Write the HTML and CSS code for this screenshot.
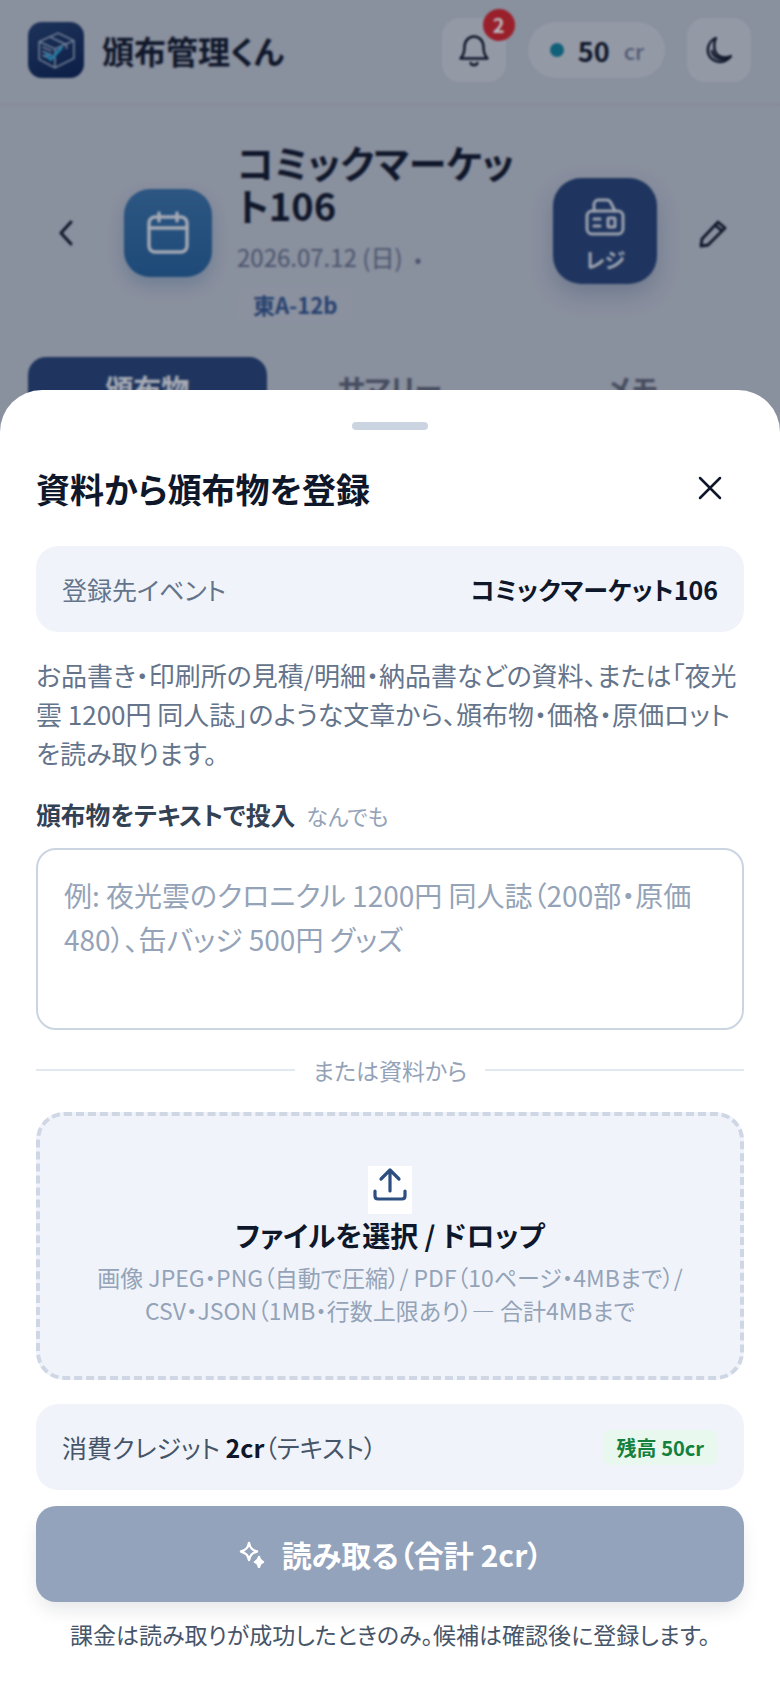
FILE: index.html
```html
<!DOCTYPE html>
<html lang="ja">
	<head>
		<meta charset="utf-8">
		<title>頒布管理くん</title>
		<link rel="stylesheet" href="styles.css">
	</head>
	<body>
		<header class="topbar">
			<div class="brand">
				<div class="brand-logo">
					<svg viewBox="0 0 40 40" width="42" height="42" fill="none" stroke="#a9bad0" stroke-width="1.4" stroke-linejoin="round">
						<path d="M4 12 L22 4 L37 11 L37 28 L19 37 L4 29 Z"/>
						<path d="M4 12 L19 19 L37 11 M19 19 L19 37"/>
						<path d="M15 8 L30 15 L30 19"/>
						<path d="M7 17 L16 21 M7 21 L16 25 M7 25 L16 29"/>
						<path d="M11 24 L15 29 L25 18" stroke="#2ea4d6" stroke-width="3" stroke-linecap="round"/>
					</svg>
				</div>
				<span class="brand-name">頒布管理くん</span>
			</div>
			<div class="top-actions">
				<button class="icon-btn">
					<svg viewBox="0 0 32 32" width="36" height="36" fill="none" stroke="#0f172a" stroke-width="2.2" stroke-linecap="round" stroke-linejoin="round">
						<path d="M4 23.5 C6.5 21 7.5 19 7.5 14 C7.5 8 11 4 16 4 C21 4 24.5 8 24.5 14 C24.5 19 25.5 21 28 23.5 Z"/>
						<path d="M13 27.5 C13.5 30 18.5 30 19 27.5"/>
					</svg>
					<span class="badge">2</span>
				</button>
				<div class="credit-pill">
					<span class="credit-dot"></span>
					<span class="credit-num">50</span>
					<span class="credit-unit">cr</span>
				</div>
				<button class="icon-btn">
					<svg viewBox="0 0 32 32" width="32" height="32" fill="none" stroke="#0f172a" stroke-width="2.4" stroke-linecap="round" stroke-linejoin="round">
						<path d="M13 4 C6 7 3.5 14 5.5 20 C8 27 17 30 23 26.5 C25 25.5 27 24 28 22 C21 25 14 23 12 17 C10.5 12 11 8 13 4 Z"/>
						<path d="M9 17 C10 23 17 27 24 25"/>
					</svg>
				</button>
			</div>
		</header>

		<section class="event-head">
			<button class="plain-btn back-btn">
				<svg viewBox="0 0 24 32" width="24" height="32" fill="none" stroke="#0f172a" stroke-width="3" stroke-linecap="round" stroke-linejoin="round"><path d="M17 5 L7 16 L17 27"/></svg>
			</button>
			<div class="event-icon">
				<svg viewBox="0 0 44 44" width="44" height="44" fill="none" stroke="#e4e8ef" stroke-width="3.4" stroke-linecap="round" stroke-linejoin="round">
					<rect x="3" y="6" width="38" height="35" rx="6"/>
					<path d="M3 17 H41 M13 2 V10 M31 2 V10"/>
				</svg>
			</div>
			<div class="event-info">
				<h1 class="event-title">コミックマーケット106</h1>
				<div class="event-date">2026.07.12 (日)<span class="event-sep">•</span></div>
				<span class="event-space">東A-12b</span>
			</div>
			<button class="register-btn">
				<svg viewBox="0 0 40 40" width="40" height="40" fill="none" stroke="#d8dee8" stroke-width="3" stroke-linecap="round" stroke-linejoin="round">
					<path d="M9 14 V8 C9 5 11 3 13 3 H22 C24 3 25 4 26 6 L30 14"/>
					<rect x="2" y="14" width="36" height="23" rx="5"/>
					<path d="M9 22 H15 M9 29 H15"/>
					<rect x="23" y="21" width="7" height="9" rx="1"/>
				</svg>
				<span>レジ</span>
			</button>
			<button class="plain-btn edit-btn">
				<svg viewBox="0 0 32 32" width="32" height="32" fill="none" stroke="#0f172a" stroke-width="2.8" stroke-linejoin="round"><path d="M5 22 L21 5 L28 11 L11 28 L4 29 Z M18 8 L25 14"/></svg>
			</button>
		</section>

		<nav class="tabs">
			<div class="tab active">頒布物</div>
			<div class="tab">サマリー</div>
			<div class="tab">メモ</div>
		</nav>

		<div class="overlay"></div>

		<div class="sheet">
			<div class="handle"></div>
			<div class="sheet-head">
				<h2>資料から頒布物を登録</h2>
				<svg viewBox="0 0 28 28" width="28" height="28" fill="none" stroke="#0f172a" stroke-width="2.5" stroke-linecap="round"><path d="M4 4 L24 24 M24 4 L4 24"/></svg>
			</div>
			<div class="info-row">
				<span class="info-label">登録先イベント</span>
				<strong>コミックマーケット106</strong>
			</div>
			<p class="lead">お品書き・印刷所の見積/明細・納品書などの資料、または「夜光雲 1200円 同人誌」のような文章から、頒布物・価格・原価ロットを読み取ります。</p>
			<div class="field-label">頒布物をテキストで投入<span>なんでも</span></div>
			<div class="textarea">例: 夜光雲のクロニクル 1200円 同人誌（200部・原価480）、缶バッジ 500円 グッズ</div>
			<div class="divider">または資料から</div>
			<div class="dropzone">
				<div class="upload-icon">
					<svg viewBox="0 0 36 36" width="36" height="36" fill="none" stroke="#2c4f80" stroke-width="3.2" stroke-linecap="round" stroke-linejoin="round"><path d="M18 24 V4 M9 12 L18 3 L27 12 M3 24 V29 C3 31 4 32 6 32 H30 C32 32 33 31 33 29 V24"/></svg>
				</div>
				<div class="drop-title">ファイルを選択 / ドロップ</div>
				<div class="drop-sub">画像 JPEG・PNG（自動で圧縮）/ PDF（10ページ・4MBまで）/<br>CSV・JSON（1MB・行数上限あり）— 合計4MBまで</div>
			</div>
			<div class="info-row credit-row">
				<span class="credit-text">消費クレジット <b>2cr</b>（テキスト）</span>
				<span class="balance">残高 50cr</span>
			</div>
			<button class="submit">
				<svg viewBox="0 0 28 28" width="28" height="28" fill="none" stroke="#fff" stroke-width="2.4" stroke-linejoin="round">
					<path d="M11 3 C12 8 14 10 19 11.5 C14 13 12 15 11 20 C10 15 8 13 3 11.5 C8 10 10 8 11 3 Z"/>
					<path d="M21 17 C21.5 20 22.5 21 25 22 C22.5 23 21.5 24 21 27 C20.5 24 19.5 23 17 22 C19.5 21 20.5 20 21 17 Z" fill="#fff"/>
				</svg>
				<span>読み取る（合計 2cr）</span>
			</button>
			<p class="note">課金は読み取りが成功したときのみ。候補は確認後に登録します。</p>
		</div>
	</body>
</html>
```

FILE: styles.css
```css
* {
	box-sizing: border-box;
}
html, body {
	height: 1688px;
}
body {
	margin: 0;
	overflow: hidden;
	position: relative;
	background: #bec4d0;
	color: #0f172a;
	font-family: "Noto Sans CJK JP", "Noto Sans", sans-serif;
	font-feature-settings: "palt";
}
button {
	font: inherit;
	border: none;
	background: none;
	padding: 0;
}

.topbar {
	display: flex;
	align-items: center;
	justify-content: space-between;
	height: 105px;
	padding: 0 29px 4px 28px;
	border-bottom: 1px solid #b3b8c4;
}
.brand {
	display: flex;
	align-items: center;
	gap: 18px;
}
.brand-logo {
	width: 56px;
	height: 56px;
	display: flex;
	align-items: center;
	justify-content: center;
	border-radius: 14px;
	background: linear-gradient(160deg, #243f6e, #0a2252);
}
.brand-name {
	font-size: 32px;
	font-weight: 700;
}
.top-actions {
	display: flex;
	align-items: center;
	gap: 22px;
}
.icon-btn {
	position: relative;
	width: 64px;
	height: 64px;
	display: flex;
	align-items: center;
	justify-content: center;
	border-radius: 18px;
	background: #cdd2db;
}
.badge {
	position: absolute;
	top: -9px;
	right: -9px;
	width: 32px;
	height: 32px;
	border-radius: 50%;
	background: #d5242c;
	color: #fff;
	font-size: 20px;
	font-weight: 700;
	line-height: 32px;
	text-align: center;
}
.credit-pill {
	display: flex;
	align-items: center;
	height: 56px;
	padding: 0 21px 0 22px;
	border-radius: 28px;
	background: #cdd2db;
}
.credit-dot {
	width: 14px;
	height: 14px;
	border-radius: 50%;
	background: #12809b;
	margin-right: 14px;
}
.credit-num {
	font-size: 27px;
	font-weight: 700;
	margin-right: 14px;
}
.credit-unit {
	font-size: 22px;
	font-weight: 500;
	color: #6c7994;
}

.event-head {
	display: flex;
	align-items: center;
	padding: 35px 0 0 54px;
}
.plain-btn {
	display: flex;
	align-items: center;
	justify-content: center;
}
.back-btn {
	margin-right: 46px;
}
.event-icon {
	flex: none;
	width: 88px;
	height: 88px;
	display: flex;
	align-items: center;
	justify-content: center;
	border-radius: 26px;
	background: linear-gradient(180deg, #3a72a8, #24609a);
	box-shadow: 0 8px 16px rgba(36, 96, 154, 0.25);
}
.event-info {
	width: 285px;
	margin: 0 0 5px 25px;
}
.event-title {
	margin: 0;
	font-size: 38px;
	font-weight: 700;
	line-height: 43px;
}
.event-date {
	margin-top: 13px;
	font-size: 24px;
	line-height: 36px;
	color: #64708a;
}
.event-sep {
	margin-left: 12px;
	font-size: 20px;
}
.event-space {
	display: block;
	width: fit-content;
	margin-top: 10px;
	padding: 0 16px;
	border-radius: 8px;
	background: #c0c6d2;
	font-size: 22px;
	font-weight: 700;
	line-height: 34px;
	color: #33558e;
}
.register-btn {
	flex: none;
	width: 104px;
	height: 106px;
	margin: 0 0 4px 31px;
	padding-top: 7px;
	display: flex;
	flex-direction: column;
	align-items: center;
	justify-content: center;
	gap: 8px;
	border-radius: 28px;
	background: #264376;
	color: #d8dee8;
	font-size: 21px;
	line-height: 28px;
	font-weight: 700;
	box-shadow: 0 10px 22px rgba(38, 67, 118, 0.25);
}
.edit-btn {
	margin-left: 40px;
}

.tabs {
	display: flex;
	margin: 31px 28px 0;
	gap: 4px;
}
.tab {
	flex: 1;
	height: 80px;
	padding-top: 11px;
	border-radius: 18px;
	text-align: center;
	font-size: 28px;
	font-weight: 700;
	color: #5e6576;
}
.tab.active {
	background: #264376;
	color: #e8ebf0;
}

.overlay {
	position: absolute;
	inset: 0;
	background: rgba(15, 23, 42, 0.3);
	backdrop-filter: blur(1px);
}

.sheet {
	position: absolute;
	top: 390px;
	left: 0;
	right: 0;
	bottom: 0;
	padding: 32px 36px 0;
	background: #fff;
	border-radius: 42px 42px 0 0;
}
.handle {
	width: 76px;
	height: 8px;
	margin: 0 auto;
	border-radius: 4px;
	background: #cbd5e1;
}
.sheet-head {
	display: flex;
	align-items: center;
	justify-content: space-between;
	height: 50px;
	margin-top: 33px;
	padding-right: 20px;
}
.sheet-head h2 {
	margin: 0;
	font-size: 34px;
	font-weight: 700;
}
.info-row {
	display: flex;
	align-items: center;
	justify-content: space-between;
	height: 86px;
	margin-top: 33px;
	padding: 0 26px;
	border-radius: 22px;
	background: #f0f4fa;
	font-size: 25px;
}
.info-row strong {
	font-weight: 700;
}
.info-label {
	color: #64748b;
}
.lead {
	margin: 23px 0 0;
	font-size: 26px;
	line-height: 39px;
	color: #64748b;
}
.field-label {
	margin-top: 24px;
	font-size: 24.8px;
	font-weight: 700;
	line-height: 36px;
	color: #334155;
}
.field-label span {
	margin-left: 11px;
	font-size: 22px;
	font-weight: 400;
	color: #94a3b8;
}
.textarea {
	height: 182px;
	margin-top: 15px;
	padding: 23px 26px;
	border: 2px solid #cbd5e1;
	border-radius: 20px;
	font-size: 28px;
	line-height: 44px;
	color: #94a3b8;
}
.divider {
	display: flex;
	align-items: center;
	gap: 18px;
	height: 32px;
	margin-top: 24px;
	font-size: 23px;
	color: #94a3b8;
}
.divider::before, .divider::after {
	content: "";
	flex: 1;
	height: 2px;
	background: #e2e8f0;
}
.dropzone {
	height: 268px;
	margin-top: 26px;
	padding-top: 50px;
	display: flex;
	flex-direction: column;
	align-items: center;
	border: 4px dashed #cfd6e4;
	border-radius: 28px;
	background: #f0f4fa;
}
.upload-icon {
	width: 44px;
	height: 48px;
	padding-top: 1px;
	display: flex;
	justify-content: center;
	background: #fff;
}
.drop-title {
	margin-top: 1px;
	font-size: 28px;
	font-weight: 700;
	line-height: 40px;
}
.drop-sub {
	margin-top: 6px;
	font-size: 23px;
	line-height: 33px;
	text-align: center;
	color: #94a3b8;
}
.credit-row {
	margin-top: 24px;
}
.credit-text {
	color: #475569;
}
.credit-text b {
	font-weight: 700;
	color: #0f172a;
}
.balance {
	padding: 0 14px;
	height: 35px;
	line-height: 35px;
	border-radius: 8px;
	background: #e8f8ee;
	color: #15803d;
	font-size: 20px;
	font-weight: 700;
}
.submit {
	width: 100%;
	height: 96px;
	margin-top: 16px;
	display: flex;
	align-items: center;
	justify-content: center;
	gap: 16px;
	border-radius: 20px;
	background: #94a3bc;
	color: #fff;
	font-size: 30px;
	font-weight: 700;
	box-shadow: 0 10px 20px -4px rgba(15, 23, 42, 0.12);
}
.note {
	margin: 15px 0 0;
	font-size: 23px;
	line-height: 34px;
	text-align: center;
	color: #475569;
}
```
